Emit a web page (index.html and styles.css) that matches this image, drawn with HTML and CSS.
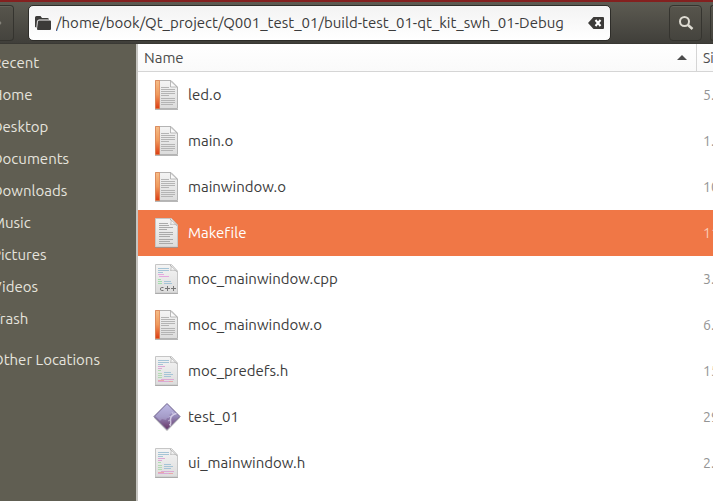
FILE: index.html
```html
<!DOCTYPE html>
<html lang="en">
<head>
<meta charset="utf-8">
<title>Files</title>
<link rel="stylesheet" href="styles.css">
</head>
<body>
<svg class="symbols" width="0" height="0" aria-hidden="true">
  <defs>
    <linearGradient id="paper" x1="0" y1="0" x2="0" y2="1"><stop offset="0" stop-color="#f4f4f4"/><stop offset="1" stop-color="#dcdcdc"/></linearGradient>
    <linearGradient id="spine" x1="0" y1="0" x2="0" y2="1"><stop offset="0" stop-color="#f5bd88"/><stop offset=".5" stop-color="#f09a5c"/><stop offset="1" stop-color="#dc3c14"/></linearGradient>
    <linearGradient id="gem" x1="0" y1="0" x2="0" y2="1"><stop offset="0" stop-color="#b9b5e2"/><stop offset=".5" stop-color="#9488b8"/><stop offset="1" stop-color="#673364"/></linearGradient>
    <symbol id="object" viewBox="0 0 28 32">
      <path d="M2.500 1.500h15.500l6.500 6.500v21.500h-22z" fill="url(#paper)" stroke="#b4b4b4"/>
      <path d="M2 30.500h23" stroke="#888" opacity=".6"/>
      <path d="M2.500 1.500h4v28h-4z" fill="url(#spine)" stroke="#e07b45" stroke-opacity=".7"/>
      <path d="M17.500 2v6h6.500z" fill="#fafafa" stroke="#aaa" stroke-width=".8"/>
      <path d="M8 8.500h8M8 10.500h14M8 12.500h14M8 14.500h14M8 16.500h8M8 19.500h14M8 21.500h14M8 23.500h14M8 25.500h12" stroke="#b4b4b4"/>
    </symbol>
    <symbol id="page" viewBox="0 0 28 32">
      <path d="M2.500 1.500h16l6 6.500v22h-22z" fill="url(#paper)" stroke="#c6c6c6"/>
      <path d="M2 30.500h23" stroke="#888" opacity=".6"/>
      <path d="M17 2c2 1 1 4 .5 5.500 2-.5 5-.5 6.500 1z" fill="#f8f8f8" stroke="#aaa" stroke-width=".7"/>
    </symbol>
    <symbol id="text" viewBox="0 0 28 32">
      <use href="#page"/>
      <path d="M6 6.500h9M6 8.500h10M6 10.500h14M6 12.500h8M6 15.500h14M6 17.500h14M6 19.500h11M6 22.500h14M6 24.500h11M6 26.500h14" stroke="#aaa"/>
    </symbol>
    <symbol id="header" viewBox="0 0 28 32">
      <use href="#page"/>
      <path d="M5 5.500h11M5 7.500h11M5 9.500h5M11 17.500h7M11 19.500h9M11 21.500h7" stroke="#a5c4d6"/>
      <path d="M5 11.500h7M5 13.500h4M8 24.500h13M5 26.500h11" stroke="#dba9d5"/>
      <path d="M5 15.500h3M5 18.500h4M5 20.500h4M5 22.500h4" stroke="#b2dcb2"/>
      <path d="M5 25.500h6M16 26.500h4" stroke="#e9a9a9"/>
    </symbol>
    <symbol id="cpp" viewBox="0 0 28 32">
      <use href="#page"/>
      <path d="M5 5.500h11M5 7.500h11M5 9.500h5M11 18.500h7M11 20.500h8" stroke="#a5c4d6"/>
      <path d="M5 11.500h6M6 13.500h10" stroke="#e4a8de"/>
      <path d="M5 16.500h3M5 18.500h4M5 20.500h4" stroke="#a2e0ac"/>
      <path d="M10.500 24.500H8.500Q7.500 24.500 7.500 26T8.500 27.500h2M12 25.500h5M14.500 23v5M18 25.500h5M20.500 23v5" fill="none" stroke="#777"/>
    </symbol>
    <symbol id="program" viewBox="0 0 28 32">
      <path d="M14 4 26 16.500 14 29 2 16.500z" fill="#999" opacity=".35" stroke="#777" stroke-width="2" stroke-linejoin="round"/>
      <path d="M14 2.500 27 15.500 14 28.500 1 15.500z" fill="url(#gem)" stroke="#746790" stroke-linejoin="round"/>
      <path d="M14 3.500 23 12.500 20 13.500 19 12l-3 2v3l-2 0-1 2-4-1-2 2-4.500-5z" fill="#c9c5ea" opacity=".35"/>
      <path d="M23.500 12.500c-4 1-6 3-6 6 0 3 1 4-.5 6.500" fill="none" stroke="#e7e2f3" stroke-opacity=".75" stroke-width="1.500"/>
      <path d="M20 13l-1-2M18 16l-2-1M17 19l-2 1M18 22l-2 2" stroke="#ded8ed" stroke-opacity=".6"/>
    </symbol>
  </defs>
</svg>
<div class="window">
  <header class="toolbar">
    <button class="tool tool-back" aria-label="Forward"><svg width="2" height="4" viewBox="0 0 2 4"><path d="M0 0 1.500 2 0 4z" fill="#85837b"/></svg></button>
    <div class="location">
      <svg width="16" height="14" viewBox="0 0 16 14" aria-hidden="true"><path d="M0 11V1.500Q0 0 1.500 0h4L7 2h5.500Q14 2 14 3.500H4Q2.500 3.500 2.500 5v7z" fill="#3c3b39"/><path d="M4 4.500h11q1 0 1 1V13q0 1-1 1H3q-1 0-1-1l1-7.500q0-1 1-1z" fill="#3c3b39"/><path d="M1.500 12.500 2.500 4.500" stroke="#f5f5f5" stroke-width=".7"/></svg>
      <input class="path" type="text" aria-label="Location" value="/home/book/Qt_project/Q001_test_01/build-test_01-qt_kit_swh_01-Debug">
      <button class="clear" aria-label="Clear"><svg width="16" height="12" viewBox="0 0 16 12"><path d="M5.500 0H15q1 0 1 1v10q0 1-1 1H5.500L0 6z" fill="#3c3b39"/><path d="m7.500 3 5 6m0-6-5 6" stroke="#fff" stroke-width="2"/></svg></button>
    </div>
    <button class="tool tool-search" aria-label="Search"><svg width="16" height="16" viewBox="0 0 16 16"><circle cx="6.500" cy="6.500" r="4.500" fill="none" stroke="#dedbd2" stroke-width="2"/><path d="m10 10 4.500 4" stroke="#dedbd2" stroke-width="2.500"/></svg></button>
    <button class="tool tool-view" aria-label="View"></button>
  </header>
  <div class="content">
    <nav class="places">
      <a href="#">Recent</a>
      <a href="#">Home</a>
      <a href="#">Desktop</a>
      <a href="#">Documents</a>
      <a href="#">Downloads</a>
      <a href="#">Music</a>
      <a href="#">Pictures</a>
      <a href="#">Videos</a>
      <a href="#">Trash</a>
      <a href="#" class="other">Other Locations</a>
    </nav>
    <main class="listing">
      <table class="files">
        <thead>
          <tr><th><div class="heading">Name<svg width="10" height="5" viewBox="0 0 10 5" aria-hidden="true"><path d="M0 5 5 0l5 5z" fill="#4c4c4c"/></svg></div></th><th class="size">Size</th></tr>
        </thead>
        <tbody>
          <tr><td><div class="file"><svg class="icon"><use href="#object"/></svg>led.o</div></td><td class="size">5.</td></tr>
          <tr><td><div class="file"><svg class="icon"><use href="#object"/></svg>main.o</div></td><td class="size">1.</td></tr>
          <tr><td><div class="file"><svg class="icon"><use href="#object"/></svg>mainwindow.o</div></td><td class="size">10</td></tr>
          <tr class="selected"><td><div class="file"><svg class="icon"><use href="#text"/></svg>Makefile</div></td><td class="size">11</td></tr>
          <tr><td><div class="file"><svg class="icon"><use href="#cpp"/></svg>moc_mainwindow.cpp</div></td><td class="size">3.</td></tr>
          <tr><td><div class="file"><svg class="icon"><use href="#object"/></svg>moc_mainwindow.o</div></td><td class="size">6.</td></tr>
          <tr><td><div class="file"><svg class="icon"><use href="#header"/></svg>moc_predefs.h</div></td><td class="size">15</td></tr>
          <tr><td><div class="file"><svg class="icon"><use href="#program"/></svg>test_01</div></td><td class="size">29</td></tr>
          <tr><td><div class="file"><svg class="icon"><use href="#header"/></svg>ui_mainwindow.h</div></td><td class="size">2.</td></tr>
        </tbody>
      </table>
    </main>
  </div>
</div>
</body>
</html>
```
FILE: styles.css
```css
* { box-sizing: border-box; }

body {
  margin: 0;
  font: 15px/20px Ubuntu, "Noto Sans", sans-serif;
  font-variant-ligatures: none;
  color: #3c3c3c;
  background: #fff;
}

.symbols { display: block; }

.window {
  display: flex;
  flex-direction: column;
  min-height: 100vh;
  overflow: hidden;
}

.toolbar {
  display: flex;
  height: 44px;
  padding: 3px 0;
  border-top: 2px solid #84201f;
  border-bottom: 1px solid #3a3934;
  background: linear-gradient(#5d5b52, #403f3a);
}

.tool {
  display: flex;
  align-items: center;
  justify-content: center;
  flex: none;
  width: 33px;
  height: 36px;
  padding: 0;
  border: 1px solid #35342f;
  border-radius: 4px;
  background: linear-gradient(#57554c, #45443e);
  box-shadow: inset 0 1px #64625a;
}

.tool-back {
  width: 14px;
  justify-content: flex-start;
  border-left: 0;
  border-radius: 0 4px 4px 0;
}

.tool-search { margin: 0 8px 0 58px; }

.tool-view {
  width: 3px;
  border-right: 0;
  border-radius: 4px 0 0 4px;
}

.location {
  display: flex;
  align-items: center;
  gap: 5px;
  flex: 1;
  min-width: 0;
  height: 36px;
  margin-left: 14px;
  padding: 0 6px;
  border: 1px solid #2e2d29;
  border-radius: 5px;
  background: linear-gradient(#f3f3f3, #fff);
}

.path {
  flex: 1;
  min-width: 0;
  padding: 0;
  border: 0;
  outline: 0;
  background: none;
  font: inherit;
  color: inherit;
}

.clear {
  display: flex;
  padding: 0;
  border: 0;
  background: none;
}

.content {
  display: flex;
  flex: 1;
}

.places {
  display: flex;
  flex-direction: column;
  flex: none;
  width: 138px;
  padding-top: 3px;
  border-right: 2px solid #c5c4c0;
  background: #605e52;
}

.places a {
  margin-left: -8px;
  line-height: 32px;
  color: #e6e4de;
  text-decoration: none;
  white-space: nowrap;
}

.places .other { margin-top: 9px; }

.listing {
  flex: 1;
  min-width: 0;
}

.files {
  width: 100%;
  table-layout: fixed;
  border-collapse: separate;
  border-spacing: 0;
}

.files th {
  height: 28px;
  padding: 0 9px 0 6px;
  border-bottom: 1px solid #d5d5d5;
  background: linear-gradient(#fff, #fafafa);
  font-weight: normal;
  text-align: left;
  color: #4c4c4c;
}

.heading {
  display: flex;
  align-items: center;
  justify-content: space-between;
}

.files td {
  height: 46px;
  padding: 0 0 0 15px;
}

.files .size {
  width: 17px;
  padding: 0 0 0 7px;
  overflow: hidden;
  font-size: 14px;
  white-space: nowrap;
}

.files th.size {
  padding-left: 6px;
  border-left: 1px solid #d5d5d5;
}

.files td.size { color: #949494; }

.file {
  display: flex;
  align-items: center;
  gap: 7px;
}

.icon {
  flex: none;
  width: 28px;
  height: 32px;
}

.files .selected td {
  background: #f07746;
  color: #fff;
}

.files .selected td.size { color: #f8cdb9; }
```
